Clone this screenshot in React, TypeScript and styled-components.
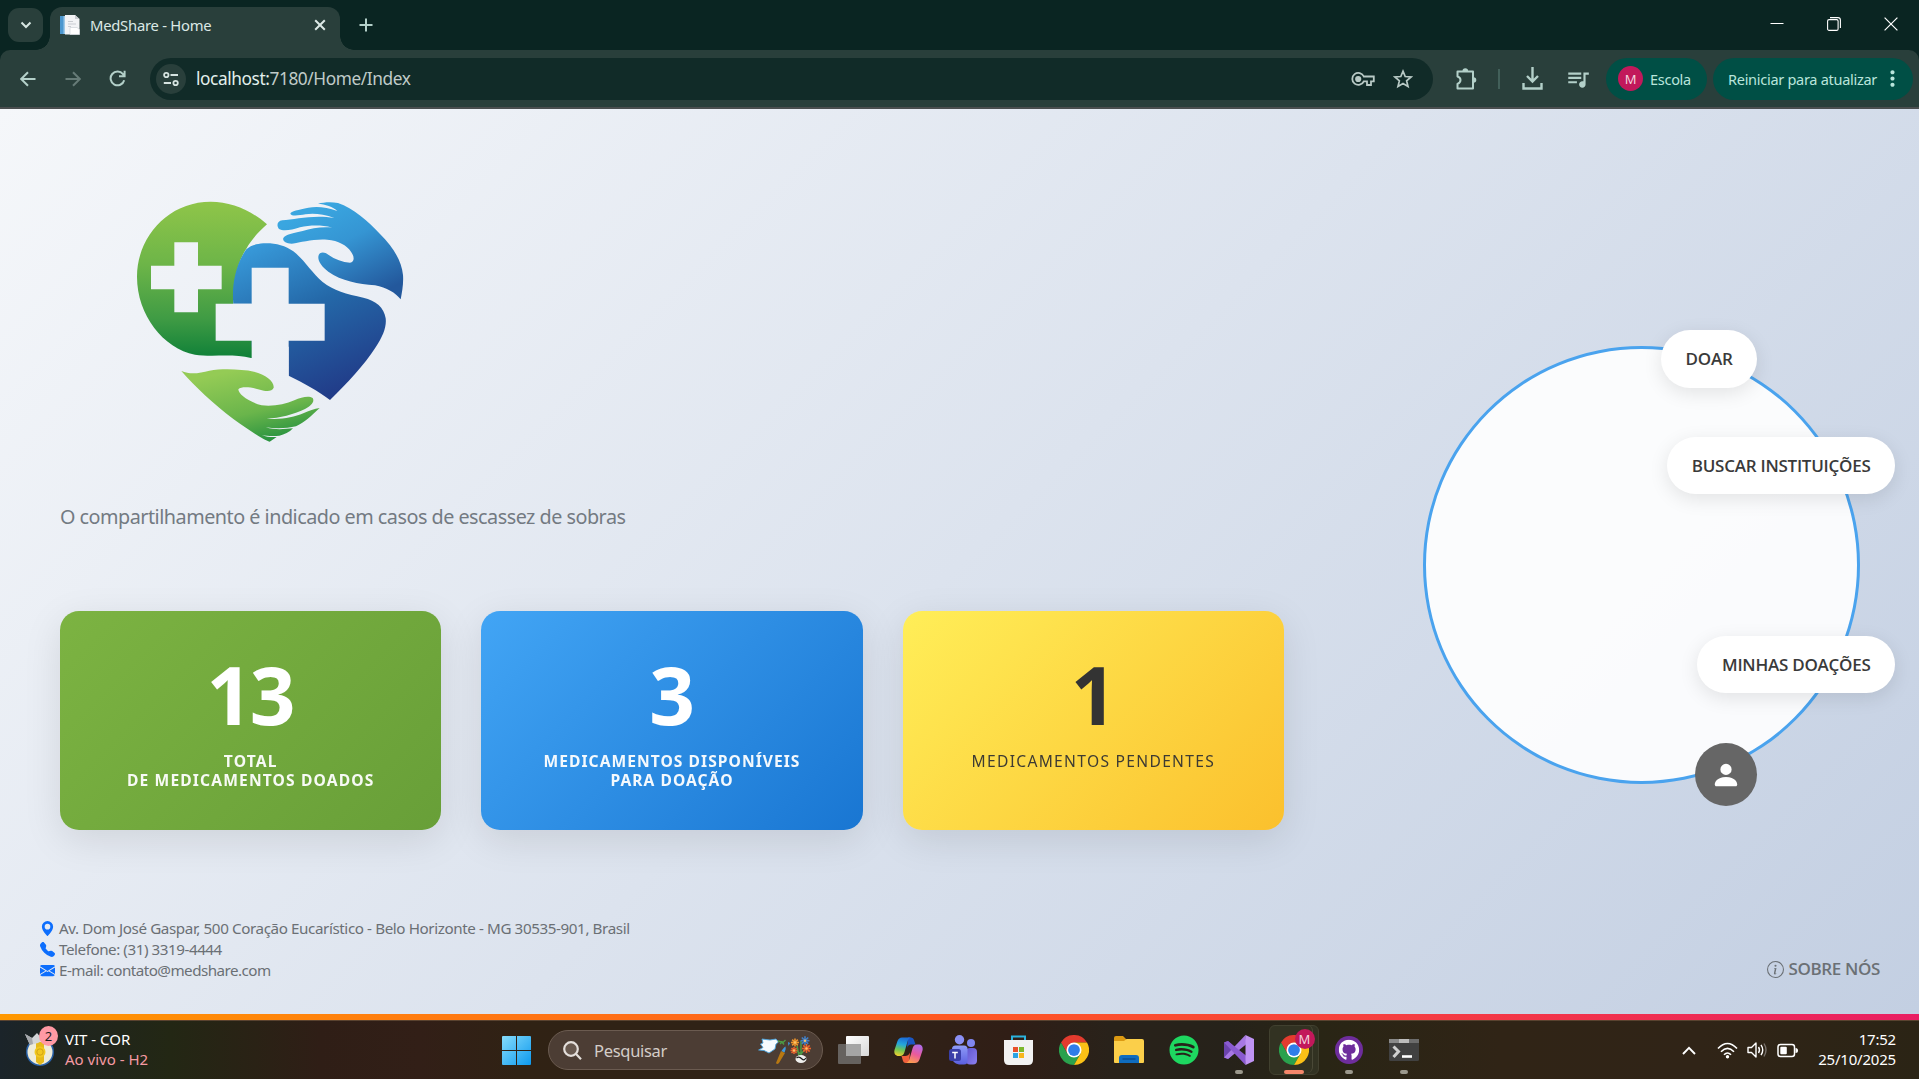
import React from 'react';
import styled, { createGlobalStyle } from 'styled-components';
import { BsPersonFill, BsGeoAltFill, BsTelephoneFill, BsEnvelopeFill, BsInfoCircle } from 'react-icons/bs';
import { MdQueueMusic, MdMoreVert } from 'react-icons/md';
import { FaSpotify, FaGithub } from 'react-icons/fa';

const GlobalStyle = createGlobalStyle`
  *, *::before, *::after { box-sizing: border-box; }
  body { margin: 0; overflow: hidden; font-family: 'Noto Sans', 'Open Sans', sans-serif; }
  svg { display: block; flex: none; }
`;

const Screen = styled.div`
  width: 1919px;
  height: 1079px;
  display: flex;
  flex-direction: column;
  overflow: hidden;
`;

/* ---------- Browser ---------- */

const TabStrip = styled.div`
  height: 50px;
  flex: none;
  background: #0a2522;
  display: flex;
  padding: 7px 0 0 8px;
`;

const TabSearch = styled.button`
  width: 35px;
  height: 34px;
  margin-top: 1px;
  border: 0;
  border-radius: 11px;
  background: #293f3b;
  display: grid;
  place-items: center;
  padding: 0;
`;

const Tab = styled.div`
  position: relative;
  width: 290px;
  height: 43px;
  margin-left: 7px;
  padding: 0 13px 7px 10px;
  border-radius: 12px 12px 0 0;
  background: #293f3b;
  display: flex;
  align-items: center;
  color: #dce9e6;
  &::before, &::after {
    content: '';
    position: absolute;
    bottom: 0;
    width: 14px;
    height: 14px;
  }
  &::before { left: -14px; background: radial-gradient(circle at 0 0, transparent 13.5px, #293f3b 14px); }
  &::after { right: -14px; background: radial-gradient(circle at 100% 0, transparent 13.5px, #293f3b 14px); }
`;

const TabTitle = styled.span`
  flex: 1;
  margin-left: 10px;
  font-size: 14.8px;
  letter-spacing: -0.25px;
  line-height: 20px;
  white-space: nowrap;
`;

const NewTab = styled.div`
  width: 52px;
  height: 36px;
  display: grid;
  place-items: center;
`;

const WindowButtons = styled.div`
  margin-left: auto;
  display: flex;
  height: 34px;
`;

const WindowButton = styled.div`
  width: 57px;
  display: grid;
  place-items: center;
`;

const Toolbar = styled.div`
  height: 59px;
  flex: none;
  background: #293f3b;
  border-bottom: 2px solid #4a4e4f;
  border-radius: 10px 10px 0 0;
  display: flex;
  align-items: center;
  padding: 0 6px 0 5px;
  color: #a9c9c1;
`;

const ToolbarShell = styled.div`
  background: #0a2522;
  flex: none;
`;

const NavButton = styled.div<{ $w?: number; $dim?: boolean }>`
  width: ${p => p.$w ?? 45}px;
  height: 42px;
  flex: none;
  display: grid;
  place-items: center;
  color: ${p => (p.$dim ? '#667b77' : '#b3d0c9')};
`;

const Omnibox = styled.div`
  width: 1283px;
  height: 42px;
  margin-left: 10px;
  padding: 0 20px 0 6px;
  border-radius: 21px;
  background: #112b28;
  display: flex;
  align-items: center;
  color: #d6e0de;
`;

const SiteInfo = styled.div`
  width: 30px;
  height: 30px;
  border-radius: 50%;
  background: #293f3b;
  display: grid;
  place-items: center;
  color: #d6e3e0;
`;

const Address = styled.span`
  flex: 1;
  margin-left: 10px;
  padding-top: 1px;
  font-size: 17.3px;
  line-height: 24px;
  letter-spacing: -0.42px;
  color: #c0cbc9;
  b { font-weight: 400; color: #e3f0ed; }
`;

const OmniActions = styled.div`
  display: flex;
  align-items: center;
  gap: 18px;
  color: #b8c9c5;
`;

const Divider = styled.i`
  width: 2px;
  height: 20px;
  background: #42605a;
`;

const Pill = styled.div<{ $w: number; $gap: number }>`
  width: ${p => p.$w}px;
  height: 42px;
  margin-left: ${p => p.$gap}px;
  border-radius: 21px;
  background: #004f45;
  color: #b9e5dc;
  font-size: 14.5px;
  letter-spacing: -0.28px;
  display: flex;
  align-items: center;
  white-space: nowrap;
`;

const PillText = styled.span<{ $left: number; $w?: number }>`
  margin-left: ${p => p.$left}px;
  width: ${p => (p.$w ? `${p.$w}px` : 'auto')};
`;

const ProfileDot = styled.span<{ $size: number; $left?: number }>`
  width: ${p => p.$size}px;
  height: ${p => p.$size}px;
  margin-left: ${p => p.$left ?? 0}px;
  border-radius: 50%;
  background: #c2185b;
  color: #f3d3df;
  font-size: 13px;
  display: grid;
  place-items: center;
`;

/* ---------- Page ---------- */

const Page = styled.main`
  height: 905px;
  flex: none;
  display: flex;
  flex-direction: column;
  background: linear-gradient(135deg, #f5f7fa 0%, #c3cfe2 100%);
`;

const Hero = styled.div`
  display: flex;
  padding-left: 60px;
`;

const Intro = styled.section`
  width: 1224px;
  padding-top: 71px;
`;

const Logo = styled.svg`
  margin-left: 60px;
`;

const Tagline = styled.p`
  margin: 42px 0 79px;
  font-size: 19.8px;
  line-height: 30px;
  letter-spacing: -0.5px;
  color: #737a82;
`;

const Cards = styled.div`
  display: grid;
  grid-template-columns: repeat(3, 1fr);
  gap: 40px;
`;

const Card = styled.article<{ $from: string; $to: string; $ink: string }>`
  height: 219px;
  padding-top: 42px;
  border-radius: 19px;
  background: linear-gradient(135deg, ${p => p.$from}, ${p => p.$to});
  box-shadow: 0 10px 38px rgba(0, 0, 0, 0.1);
  color: ${p => p.$ink};
  text-align: center;
`;

const Count = styled.div`
  padding-right: 2px;
  font-size: 80px;
  font-weight: 700;
  line-height: 82px;
  letter-spacing: -2.500px;
`;

const CardLabel = styled.div<{ $weight: number; $track: number }>`
  margin-top: 17px;
  font-size: 15.6px;
  font-weight: ${p => p.$weight};
  line-height: 19px;
  letter-spacing: ${p => p.$track}px;
  opacity: 0.95;
`;

const Ring = styled.nav`
  position: relative;
  width: 437px;
  height: 438px;
  margin: 237px 0 0 139px;
  border: 3px solid #4aa3ee;
  border-radius: 50%;
  background: rgba(255, 255, 255, 0.9);
`;

const RingLink = styled.a<{ $top: number; $right: number; $h: number }>`
  position: absolute;
  top: ${p => p.$top}px;
  right: ${p => p.$right}px;
  height: ${p => p.$h}px;
  padding: 0 24.5px;
  border-radius: 30px;
  background: #fff;
  box-shadow: 0 5px 19px rgba(0, 0, 0, 0.1);
  color: #3a3a3a;
  font-family: 'Open Sans', sans-serif;
  font-size: 17px;
  font-weight: 600;
  line-height: ${p => p.$h}px;
  letter-spacing: -0.25px;
  white-space: nowrap;
`;

const Avatar = styled.a`
  position: absolute;
  top: 394px;
  right: 100px;
  width: 62px;
  height: 63px;
  border-radius: 50%;
  background: #666;
  color: #fff;
  display: grid;
  place-items: center;
`;

const Footer = styled.footer`
  margin-top: auto;
  padding: 0 39px 33px 40px;
  display: flex;
  justify-content: space-between;
  align-items: flex-end;
  color: #6b7075;
`;

const Contact = styled.div<{ $track: number }>`
  height: 21px;
  display: flex;
  align-items: center;
  gap: 4px;
  font-size: 15.2px;
  letter-spacing: ${p => p.$track}px;
  line-height: 21px;
  white-space: nowrap;
  svg { color: #0d6efd; }
`;

const About = styled.a`
  display: flex;
  align-items: center;
  gap: 5px;
  font-family: 'Open Sans', sans-serif;
  font-size: 17px;
  font-weight: 600;
  line-height: 24px;
  letter-spacing: -0.36px;
`;

/* ---------- Taskbar ---------- */

const AccentLine = styled.div`
  height: 6px;
  flex: none;
  background: linear-gradient(90deg, #ff9800, #ff5722 50%, #e91e63);
`;

const Taskbar = styled.div`
  height: 59px;
  flex: none;
  border-top: 1px solid #5a4330;
  background: linear-gradient(90deg, #1b242a 0, #1f251f 70px, #232714 170px, #2f1e16 320px, #321f17 420px, #302214 520px, #302218 880px, #301e16 1010px, #29221a 1110px, #26221a 1230px, #292515 1320px, #302416 1500px, #302417 1700px, #2b2415 1919px);
  display: flex;
  align-items: center;
  color: #fff;
`;

const Widget = styled.div`
  position: relative;
  width: 477px;
  padding: 0 0 2px 24px;
  display: flex;
  align-items: center;
  gap: 9px;
  font-size: 15px;
  line-height: 20px;
`;

const WidgetBadge = styled.span`
  position: absolute;
  left: 39px;
  top: -3px;
  width: 19px;
  height: 20px;
  border-radius: 50%;
  background: #ff99a4;
  color: #1c1c1c;
  font-size: 13px;
  text-align: center;
`;

const Live = styled.div`
  color: #f59aa3;
`;

const AppSlot = styled.div<{ $w?: number; $shift?: number }>`
  position: relative;
  width: ${p => p.$w ?? 55}px;
  height: 58px;
  padding-left: ${p => p.$shift ?? 0}px;
  flex: none;
  display: grid;
  place-items: center;
`;

const ActivePlate = styled.div`
  position: absolute;
  left: 3px;
  top: 4px;
  width: 50px;
  height: 50px;
  border-radius: 6px;
  background: #323222;
  border: 1px solid #41402f;
  &::after {
    content: '';
    position: absolute;
    right: 5px;
    top: -1px;
    width: 6px;
    height: 48px;
    border-right: 1px solid #4a4937;
    border-radius: 0 6px 6px 0;
  }
`;

const RunMark = styled.i<{ $active?: boolean }>`
  position: absolute;
  left: 50%;
  bottom: 5px;
  width: ${p => (p.$active ? 20 : 8)}px;
  height: 4px;
  transform: translateX(-50%);
  border-radius: 2px;
  background: ${p => (p.$active ? '#f4866a' : '#9b988c')};
`;

const AppIcon = styled.div`
  position: relative;
`;

const BadgeSpot = styled.div`
  position: absolute;
  right: -6px;
  top: -6px;
`;

const Search = styled.div`
  width: 275px;
  height: 40px;
  margin-left: 2px;
  margin-right: 3px;
  padding: 0 10px 0 14px;
  border: 1px solid #6b5b50;
  border-radius: 20px;
  background: #4c3d34;
  display: flex;
  align-items: center;
  color: #d4cdc8;
  font-size: 16.5px;
  letter-spacing: -0.3px;
`;

const SearchHint = styled.span`
  flex: 1;
  margin-left: 12px;
`;

const Tray = styled.div`
  margin-left: auto;
  padding-right: 23px;
  display: flex;
  align-items: center;
  gap: 9px;
`;

const TrayArrow = styled.div`
  margin-right: 12px;
`;

const Clock = styled.div`
  width: 89px;
  padding-bottom: 2px;
  font-size: 15px;
  line-height: 20px;
  letter-spacing: -0.2px;
  text-align: right;
  white-space: nowrap;
`;

function HeartLogo() {
  return (
    <Logo width="300" height="280" viewBox="0 0 900 840">
      <defs>
        <linearGradient id="leaf" x1="0" y1="0" x2="0" y2="1">
          <stop offset="0" stopColor="#8fc549" /><stop offset=".4" stopColor="#6db548" />
          <stop offset=".75" stopColor="#3f9b44" /><stop offset="1" stopColor="#0f8038" />
        </linearGradient>
        <linearGradient id="sea" gradientUnits="userSpaceOnUse" x1="430" y1="190" x2="640" y2="650">
          <stop offset="0" stopColor="#3798d8" /><stop offset=".45" stopColor="#2468a8" /><stop offset="1" stopColor="#213b88" />
        </linearGradient>
        <linearGradient id="handSea" gradientUnits="userSpaceOnUse" x1="620" y1="70" x2="760" y2="350">
          <stop offset="0" stopColor="#3aa6e0" /><stop offset=".4" stopColor="#3595d3" /><stop offset="1" stopColor="#23589c" />
        </linearGradient>
        <linearGradient id="handLeaf" gradientUnits="userSpaceOnUse" x1="350" y1="570" x2="400" y2="790">
          <stop offset="0" stopColor="#94cb55" /><stop offset=".6" stopColor="#6ab54b" /><stop offset="1" stopColor="#2b9440" />
        </linearGradient>
        <mask id="crosses">
          <rect width="900" height="840" fill="#fff" />
          <path d="M163 187H234V257H305V328H234V397H163V328H93V257H163Z" />
          <path d="M395 263H506V371H614V482H506V640H395V482H287V371H395Z" />
        </mask>
      </defs>
      <g mask="url(#crosses)">
        <path fill="url(#leaf)" d="M441 133C395 92 335 65 272 65C145 65 51 170 51 290C51 405 130 505 225 524C275 532 340 520 393 534L398 534V440H341C338 350 338 270 379 206C395 178 416 155 441 133Z" />
        <path fill="url(#sea)" d="M340 371H395V500H506V587C550 609 595 632 630 660C680 612 735 552 765 505C790 467 800 440 797 415C792 382 768 362 730 353C680 342 640 332 608 306C575 278 552 238 520 214C495 195 460 188 430 190C408 192 392 196 379 208C345 255 335 320 340 371Z" />
      </g>
      <path fill="url(#handSea)" d="M594 71C612 66 635 65 654 69C700 85 745 124 780 162C822 203 845 245 849 285C851 312 846 336 842 358C827 339 800 322 765 316C715 312 665 303 625 275C605 260 594 244 595 230C596 216 612 214 625 224C645 238 668 246 690 248C704 246 704 230 693 215C680 195 655 182 622 179C580 176 545 187 515 191C497 191 487 183 490 174C496 163 520 160 548 153C575 145 605 140 637 143C600 134 570 136 540 142C515 150 490 155 477 147C469 137 471 123 487 121C525 119 580 103 643 114C610 102 580 99 556 103C538 106 514 110 511 101C513 92 535 90 565 83C590 78 620 81 652 93C640 80 615 73 594 71Z" />
      <path fill="url(#handLeaf)" d="M184 573C215 586 240 578 268 572C310 565 365 568 402 575C438 583 463 605 461 623C456 636 437 634 420 629C395 622 365 618 355 628C355 642 383 665 425 676C460 680 495 673 523 661C545 651 567 647 578 654C585 665 573 677 555 687C520 704 480 714 440 716C485 720 520 712 550 700C567 693 583 685 599 684C575 707 552 728 528 739C500 746 465 746 437 742C468 751 494 747 519 745C508 757 493 764 478 767C460 769 440 768 425 765C440 771 455 772 470 771L449 785C430 780 385 749 340 717C280 672 225 620 184 573Z" />
    </Logo>
  );
}

function Chrome() {
  return (
    <svg width="30" height="30" viewBox="0 0 48 48">
      <path fill="#e33b2e" d="M3.200 12A24 24 0 0 1 44.800 12L24 12L13.600 30Z" />
      <path fill="#2aa14d" d="M3.200 12L13.600 30L34.400 30L24 48A24 24 0 0 1 3.200 12Z" />
      <path fill="#fbc116" d="M44.800 12A24 24 0 0 1 24 48L34.400 30L24 12Z" />
      <circle cx="24" cy="24" r="12" fill="#fff" />
      <circle cx="24" cy="24" r="9.400" fill="#2f7de9" />
    </svg>
  );
}

const stroke = { fill: 'none', stroke: 'currentColor', strokeWidth: 2 } as const;

function Browser() {
  return (
    <>
      <TabStrip>
        <TabSearch>
          <svg width="12" height="8" viewBox="0 0 12 8" {...stroke} stroke="#d6e6e2"><path d="M1.500 1.500L6 6L10.500 1.500" /></svg>
        </TabSearch>
        <Tab>
          <svg width="20" height="20" viewBox="0 0 20 20">
            <path fill="#4b97cf" d="M0 1H5V19H0Z" /><path fill="#9fc8e6" d="M3.500 1H6V19H3.500Z" />
            <path fill="#f3f4f6" d="M5 0H15L19.500 4V19.500H5Z" />
            <path fill="#c9ccd1" d="M15 0L19.500 4H15ZM8 6H13V7H8ZM8 8.500H16V9.500H8ZM8 11H11V12H8Z" />
            <path fill="#fff" stroke="#cfd2d8" strokeWidth=".7" d="M10 12.500H17L19.500 14.500V19.500H10Z" />
          </svg>
          <TabTitle>MedShare - Home</TabTitle>
          <svg width="14" height="14" viewBox="0 0 14 14" {...stroke}><path d="M2.200 2.200L11.800 11.800M11.800 2.200L2.200 11.800" /></svg>
        </Tab>
        <NewTab>
          <svg width="14" height="14" viewBox="0 0 14 14" {...stroke} stroke="#b3d0c9"><path d="M7 .5V13.500M.5 7H13.500" /></svg>
        </NewTab>
        <WindowButtons>
          <WindowButton><svg width="14" height="14" viewBox="0 0 14 14"><path d="M.5 6.500H13.500" stroke="#fff" /></svg></WindowButton>
          <WindowButton>
            <svg width="14" height="14" viewBox="0 0 14 14" fill="none" stroke="#fff" strokeWidth="1.100">
              <rect x=".6" y="2.600" width="10.500" height="10.800" rx="1.500" /><path d="M3 .6H11Q13.400 .6 13.400 3V11" />
            </svg>
          </WindowButton>
          <WindowButton><svg width="14" height="14" viewBox="0 0 14 14"><path d="M.6 .6L13.400 13.400M13.400 .6L.6 13.400" stroke="#fff" strokeWidth="1.200" /></svg></WindowButton>
        </WindowButtons>
      </TabStrip>
      <ToolbarShell>
        <Toolbar>
          <NavButton><svg width="16" height="16" viewBox="0 0 16 16" {...stroke}><path d="M15.500 8H1.500M8 1.200L1.200 8L8 14.800" /></svg></NavButton>
          <NavButton $dim><svg width="16" height="16" viewBox="0 0 16 16" {...stroke}><path d="M.5 8H14.500M8 1.200L14.800 8L8 14.800" /></svg></NavButton>
          <NavButton><svg width="17" height="17" viewBox="0 0 17 17" {...stroke}><path d="M15.200 10.200A6.900 6.900 0 1 1 14 4.200L15.500 6M15.600 .8V6.300H10" /></svg></NavButton>
          <Omnibox>
            <SiteInfo>
              <svg width="16" height="16" viewBox="0 0 16 16" {...stroke} strokeWidth={1.8}>
                <circle cx="3.300" cy="4" r="2.200" /><path d="M7.500 4H15M.8 12H8" /><circle cx="12.600" cy="12" r="2.200" />
              </svg>
            </SiteInfo>
            <Address><b>localhost:</b>7180/Home/Index</Address>
            <OmniActions>
              <svg width="24" height="16" viewBox="0 0 24 16" {...stroke} strokeWidth={1.8}>
                <path d="M12.800 5.500A6 6 0 1 0 12.800 10.300H16V14H20V10.300H22.800V5.500Z" /><circle cx="7.200" cy="8" r="2.200" fill="currentColor" />
              </svg>
              <svg width="20" height="20" viewBox="0 0 20 20" {...stroke} strokeWidth={1.7}>
                <path d="M10 2.200L12.200 7.500L18 8L13.600 11.800L15 17.400L10 14.400L5 17.400L6.400 11.800L2 8L7.800 7.500Z" />
              </svg>
            </OmniActions>
          </Omnibox>
          <NavButton $w={65}>
            <svg width="22" height="24" viewBox="0 0 22 24" {...stroke} strokeLinejoin="round">
              <path d="M2.500 4.500H18V21.500H2.500V17Q5.500 15.500 5.500 13Q5.500 10.500 2.500 9.500Z" />
              <path fill="currentColor" stroke="none" d="M7.500 4A2.800 2.800 0 0 1 13.100 4ZM18.500 10.200A2.800 2.800 0 0 1 18.500 15.800Z" />
            </svg>
          </NavButton>
          <Divider />
          <NavButton $w={64}>
            <svg width="21" height="23" viewBox="0 0 21 23" {...stroke} strokeWidth={2.4}>
              <path d="M10.500 0V14M5 9L10.500 14.500L16 9M1.500 16V21.500H19.500V16" />
            </svg>
          </NavButton>
          <NavButton $w={28}><MdQueueMusic size={26} /></NavButton>
          <Pill $w={101} $gap={14}>
            <ProfileDot $size={25} $left={12}>M</ProfileDot>
            <PillText $left={7}>Escola</PillText>
          </Pill>
          <Pill $w={200} $gap={6}>
            <PillText $left={15} $w={152}>Reiniciar para atualizar</PillText>
            <MdMoreVert size={25} />
          </Pill>
        </Toolbar>
      </ToolbarShell>
    </>
  );
}

function HomePage() {
  return (
    <Page>
      <Hero>
        <Intro>
          <HeartLogo />
          <Tagline>O compartilhamento é indicado em casos de escassez de sobras</Tagline>
          <Cards>
            <Card $from="#7cb342" $to="#689f38" $ink="#fff">
              <Count>13</Count>
              <CardLabel $weight={700} $track={1.15}>TOTAL<br />DE MEDICAMENTOS DOADOS</CardLabel>
            </Card>
            <Card $from="#42a5f5" $to="#1976d2" $ink="#fff">
              <Count>3</Count>
              <CardLabel $weight={700} $track={1.05}>MEDICAMENTOS DISPONÍVEIS<br />PARA DOAÇÃO</CardLabel>
            </Card>
            <Card $from="#ffee58" $to="#fbc02d" $ink="#333">
              <Count>1</Count>
              <CardLabel $weight={400} $track={1.3}>MEDICAMENTOS PENDENTES</CardLabel>
            </Card>
          </Cards>
        </Intro>
        <Ring>
          <RingLink $top={-19} $right={100} $h={58}>DOAR</RingLink>
          <RingLink $top={88} $right={-38} $h={57}>BUSCAR INSTITUIÇÕES</RingLink>
          <RingLink $top={287} $right={-38} $h={57}>MINHAS DOAÇÕES</RingLink>
          <Avatar><BsPersonFill size={30} /></Avatar>
        </Ring>
      </Hero>
      <Footer>
        <div>
          <Contact $track={-0.4}><BsGeoAltFill size={15} />Av. Dom José Gaspar, 500 Coração Eucarístico - Belo Horizonte - MG 30535-901, Brasil</Contact>
          <Contact $track={-0.45}><BsTelephoneFill size={15} />Telefone: (31) 3319-4444</Contact>
          <Contact $track={-0.54}><BsEnvelopeFill size={15} />E-mail: contato@medshare.com</Contact>
        </div>
        <About><BsInfoCircle size={17} />SOBRE NÓS</About>
      </Footer>
    </Page>
  );
}

function SearchArt() {
  const flower = (x: number, y: number, r: number, c: string) => (
    <g stroke={c} strokeWidth="1.600">
      {[0, 45, 90, 135].map(a => <path key={a} d={`M${x - r} ${y}H${x + r}`} transform={`rotate(${a} ${x} ${y})`} />)}
      <circle cx={x} cy={y} r="1.200" fill="#f7c46a" stroke="none" />
    </g>
  );
  return (
    <svg width="54" height="30" viewBox="0 0 54 30">
      <path fill="#f6fbfd" stroke="#4aa3dd" strokeWidth=".9" d="M.6 15L5 12.500L2.500 9L5 8L4 4L12 5L18 4L20.500 7L18 9L17 14L11 18L6 15.500Z" />
      <path d="M20 6L25 7.500L27.500 5M22 9L24 7L26 9.500" stroke="#4d9b45" strokeWidth="1.400" fill="none" />
      <path fill="#b87812" d="M18 28L23 16L27 18L21 28Q19 30 18 28Z" /><path fill="#3f9be0" d="M23.500 16Q26 12 27.500 11.500Q28.500 14 26.500 17.500ZM30 7L32 8L30.500 11Z" />
      <path d="M43 21V6M43 19L36 14M43 19L48 13M41 21L39 11" stroke="#4d9b45" strokeWidth="1.500" fill="none" />
      {flower(37, 7.500, 4, '#f0962c')}
      {flower(47, 5.700, 4.500, '#3f7fc9')}
      {flower(48.500, 13.500, 4.500, '#e8622c')}
      {flower(36, 15.500, 3.500, '#e8622c')}
      <ellipse cx="43" cy="24" rx="5.500" ry="4" fill="#f0f0ee" /><path d="M38.500 23Q41 21 44 24Q46 26 48 23" stroke="#222" fill="none" strokeWidth="1.300" />
    </svg>
  );
}

function SystemBar() {
  return (
    <Taskbar>
      <Widget>
        <svg width="32" height="36" viewBox="0 0 32 36">
          <circle cx="16" cy="21" r="14" fill="#2a62a8" /><circle cx="16" cy="21" r="12.500" fill="#efecd8" />
          <path fill="#e5b91a" d="M12 11H20V31L16 34L12 31Z" /><circle cx="16" cy="21" r="5.500" fill="#f2c81e" />
          <circle cx="16" cy="21" r="3.200" fill="none" stroke="#c99a12" strokeWidth=".8" />
          <path fill="#d3d5d8" d="M1 3L8 7L13 2L19 9L14 12L6 14Z" /><path fill="#a5a8ac" d="M1 3L8 7L9 13L6 14Z" />
        </svg>
        <WidgetBadge>2</WidgetBadge>
        <div>
          <div>VIT - COR</div>
          <Live>Ao vivo - H2</Live>
        </div>
      </Widget>
      <AppSlot $w={69} $shift={10}>
        <svg width="29" height="29" viewBox="0 0 29 29">
          <defs>
            <linearGradient id="win" x1="0" y1="0" x2="29" y2="29" gradientUnits="userSpaceOnUse">
              <stop offset="0" stopColor="#86dcfb" /><stop offset="1" stopColor="#0d99ee" />
            </linearGradient>
          </defs>
          <path fill="url(#win)" d="M0 1Q0 0 1 0H14V14H0ZM15 0H28Q29 0 29 1V14H15ZM0 15H14V29H1Q0 29 0 28ZM15 15H29V28Q29 29 28 29H15Z" />
        </svg>
      </AppSlot>
      <Search>
        <svg width="19" height="19" viewBox="0 0 19 19" fill="none" stroke="#e4dfdb" strokeWidth="2.200"><circle cx="8" cy="8" r="6.800" fill="#68594f" /><path d="M12.800 12.800L18 18.200" /></svg>
        <SearchHint>Pesquisar</SearchHint>
        <SearchArt />
      </Search>
      <AppSlot>
        <svg width="31" height="29" viewBox="0 0 31 29">
          <defs><linearGradient id="tv" x1="0" y1="0" x2="1" y2="1"><stop stopColor="#fff" /><stop offset="1" stopColor="#d8d8d8" /></linearGradient></defs>
          <rect x="8" y="0" width="23" height="20" rx="1" fill="url(#tv)" /><rect x="0" y="8" width="23" height="20" rx="1" fill="#66625f" />
          <rect x="8" y="8" width="15" height="12" fill="#a5a5a5" />
        </svg>
      </AppSlot>
      <AppSlot>
        <svg width="29" height="27" viewBox="0 0 29 27">
          <defs>
            <linearGradient id="cpa" x1=".4" y1="0" x2=".2" y2="1"><stop stopColor="#1c6fd8" /><stop offset=".35" stopColor="#25a6dc" /><stop offset=".65" stopColor="#6fc653" /><stop offset="1" stopColor="#f5d02e" /></linearGradient>
            <linearGradient id="cpb" x1=".7" y1="0" x2=".3" y2="1"><stop stopColor="#b06be8" /><stop offset=".5" stopColor="#ea5a9c" /><stop offset="1" stopColor="#fda04c" /></linearGradient>
          </defs>
          <path fill="#1b56c4" d="M14 .5H17Q19.500 .5 20 3L21.500 7.500H18Q14 7 13 11Z" />
          <path fill="#f0603c" d="M15 26H11.500Q9.500 26 9 24L7.500 19H11Q14.500 19 16 15.500Z" />
          <path fill="url(#cpa)" d="M8 .5H17.500Q14.500 .8 13.500 4.500L10.500 15Q9.500 19 6 19H3.500Q-.5 18 .5 13L3.500 4Q4.800 .5 8 .5Z" />
          <path fill="url(#cpb)" d="M21 26H11.500Q14.500 25.700 15.500 22L18.500 11.500Q19.500 7.500 23 7.500H25.500Q29.500 8.500 28.500 13.500L25.500 22.500Q24.200 26 21 26Z" />
        </svg>
      </AppSlot>
      <AppSlot>
        <svg width="29" height="30" viewBox="0 0 29 30">
          <defs>
            <linearGradient id="tma" x1="0" y1="0" x2="0" y2="1"><stop stopColor="#8f9cf8" /><stop offset="1" stopColor="#5b5fe0" /></linearGradient>
            <linearGradient id="tmb" x1="0" y1="0" x2="1" y2="1"><stop stopColor="#5f55cf" /><stop offset="1" stopColor="#8c80f0" /></linearGradient>
          </defs>
          <circle cx="10.500" cy="4.800" r="4.700" fill="#8b90f5" /><circle cx="22" cy="8" r="4" fill="#8087f0" />
          <rect x="17" y="13" width="11" height="16.500" rx="4" fill="url(#tmb)" />
          <path fill="url(#tma)" d="M6.500 10.500H15Q18.500 10.500 18.500 14V26Q18.500 29.500 15 29.500H10Q3 28 3 22V14Q3 10.500 6.500 10.500Z" />
          <rect x="0" y="14" width="12" height="12" rx="2.500" fill="#3a3fa8" /><path d="M3.200 17.500H8.800M6 17.500V23.500" stroke="#fff" strokeWidth="1.500" />
        </svg>
      </AppSlot>
      <AppSlot>
        <svg width="29" height="30" viewBox="0 0 29 30">
          <path d="M8 6V1.500H21V6" fill="none" stroke="#2bb3de" strokeWidth="2" />
          <path fill="#f2f2f2" d="M0 5H29V25Q29 30 24 30H5Q0 30 0 25Z" />
          <path fill="#e8502a" d="M9 12H14V17H9Z" /><path fill="#7cb82e" d="M15 12H20V17H15Z" /><path fill="#2aa3e4" d="M9 18H14V23H9Z" /><path fill="#f7b61c" d="M15 18H20V23H15Z" />
        </svg>
      </AppSlot>
      <AppSlot><Chrome /></AppSlot>
      <AppSlot>
        <svg width="30" height="28" viewBox="0 0 30 28">
          <path fill="#dc9a12" d="M0 2Q0 0 2 0H9L12 3V8H0Z" /><path fill="#fbcf4a" d="M0 5L10 5L12.500 3H28Q30 3 30 5V26Q30 27 29 27H1Q0 27 0 26Z" />
          <path fill="#0f6cbf" d="M5 22Q5 19 8 19H22Q25 19 25 22V27H5Z" /><path d="M8.500 23H21.500" stroke="#0a4a8c" strokeWidth="1.300" />
        </svg>
      </AppSlot>
      <AppSlot><FaSpotify size={30} color="#1ed760" /></AppSlot>
      <AppSlot>
        <svg width="30" height="30" viewBox="0 0 30 30">
          <path fill="#6b43ad" d="M0 7.500L4 6L8 9.500V20.500L4 24L0 22.500Z" />
          <path fill="#a778e4" d="M4 24L0 22.500L21.500 0L22.500 9Z" />
          <path fill="#8a5bd0" d="M4 6L0 7.500L21.500 30L22.500 21Z" />
          <path fill="#c094f4" d="M21.500 0L30 4V26L21.500 30Z" />
        </svg>
        <RunMark />
      </AppSlot>
      <AppSlot>
        <ActivePlate />
        <AppIcon>
          <Chrome />
          <BadgeSpot><ProfileDot $size={20}>M</ProfileDot></BadgeSpot>
        </AppIcon>
        <RunMark $active />
      </AppSlot>
      <AppSlot>
        <svg width="28" height="28" viewBox="0 0 28 28"><circle cx="14" cy="14" r="14" fill="#6e2d9c" /><FaGithub x={3.5} y={3.5} size={21} color="#fff" /></svg>
        <RunMark />
      </AppSlot>
      <AppSlot>
        <svg width="30" height="22" viewBox="0 0 30 22">
          <rect width="30" height="22" rx="1.500" fill="#414141" /><path fill="#8a8a8a" d="M0 0H10V4H0Z" /><path fill="#bdbdbd" d="M10 0H20V4H10Z" /><path fill="#6c6c6c" d="M20 0H30V4H20Z" />
          <path d="M4.500 7.500L9.500 12.500L4.500 18" stroke="#cfcfcf" strokeWidth="3" fill="none" /><path d="M13 17.500H23" stroke="#fff" strokeWidth="2.600" />
        </svg>
        <RunMark />
      </AppSlot>
      <Tray>
        <TrayArrow>
          <svg width="14" height="9" viewBox="0 0 14 9" fill="none" stroke="#fff" strokeWidth="1.900"><path d="M1 8L7 1.800L13 8" /></svg>
        </TrayArrow>
        <svg width="21" height="17" viewBox="0 0 21 17" fill="none" stroke="#fff" strokeWidth="1.600">
          <path d="M1 6.500Q10.500 -3.500 20 6.500M4 9.700Q10.500 3 17 9.700M7 12.800Q10.500 9.200 14 12.800" /><circle cx="10.500" cy="14.800" r="1.700" fill="#fff" stroke="none" />
        </svg>
        <svg width="21" height="18" viewBox="0 0 21 18" fill="none" stroke="#fff" strokeWidth="1.400">
          <path strokeLinejoin="round" d="M1 6.500H4.500L9 2V16L4.500 11.500H1Z" /><path d="M11.500 6Q13.500 9 11.500 12M14 3.800Q17.500 9 14 14.200" /><path stroke="#77706a" d="M17 2.500Q21 9 17 15.500" />
        </svg>
        <svg width="21" height="15" viewBox="0 0 21 15">
          <rect x="1" y="1.500" width="16.500" height="12" rx="2.500" fill="none" stroke="#fff" strokeWidth="1.500" /><rect x="3.300" y="3.800" width="6.500" height="7.400" rx="1" fill="#fff" /><path fill="#fff" d="M18.500 5Q21 5 21 7.500T18.500 10Z" />
        </svg>
        <Clock>17:52<br />25/10/2025</Clock>
      </Tray>
    </Taskbar>
  );
}

export default function App() {
  return (
    <Screen>
      <GlobalStyle />
      <Browser />
      <HomePage />
      <AccentLine />
      <SystemBar />
    </Screen>
  );
}
